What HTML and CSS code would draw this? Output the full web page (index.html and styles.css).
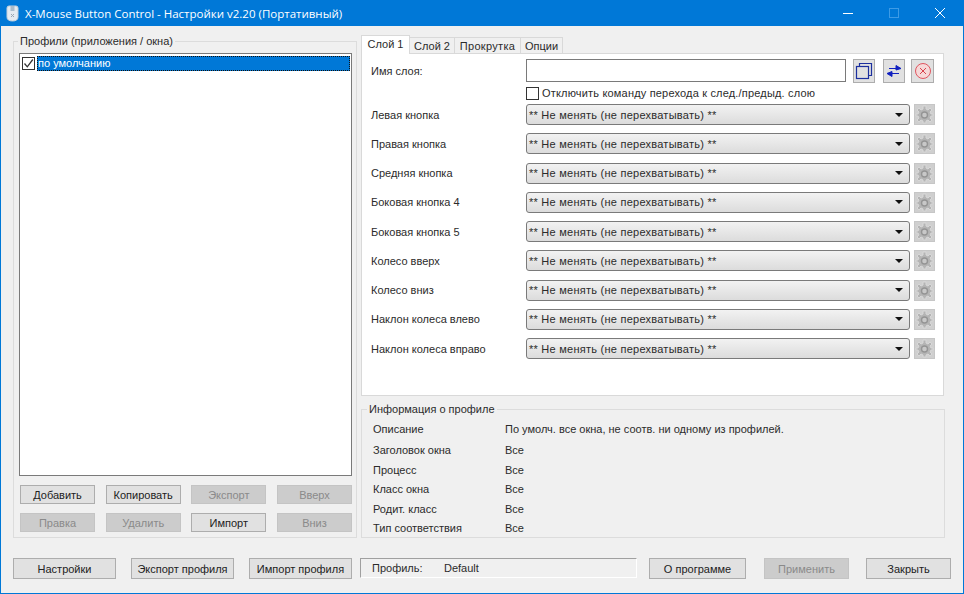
FILE: index.html
```html
<!DOCTYPE html>
<html lang="ru">
<head>
    <meta charset="UTF-8">
    <meta name="viewport" content="width=device-width, initial-scale=1.0">
    <title>X-Mouse Button Control</title>
    <link rel="stylesheet" href="styles.css">
</head>
<body>
<div class="window">
    <div class="titlebar">
        <svg class="app-icon" width="13" height="17" viewBox="0 0 13 17">
            <path d="M1 3 Q1 1 3 1 H10 Q12 1 12 3 V12 Q12 16 6.5 16 Q1 16 1 12 Z" fill="#e4ebf1" stroke="#c3d0db"/>
            <rect x="4.5" y="1" width="4" height="5" fill="#a9bccb"/>
            <path d="M5 9 L8 12 M8 9 L5 12" stroke="#9aa7b3" stroke-width="1"/>
        </svg>
        <span class="title-text">X-Mouse Button Control - Настройки v2.20 (Портативный)</span>
        <div class="win-controls">
            <svg width="12" height="12" viewBox="0 0 12 12"><path d="M1 6.5 H11" stroke="#fff"/></svg>
            <svg width="12" height="12" viewBox="0 0 12 12"><rect x="1.5" y="1.5" width="9" height="9" fill="none" stroke="#3d9be6"/></svg>
            <svg width="12" height="12" viewBox="0 0 12 12"><path d="M1 1 L11 11 M11 1 L1 11" stroke="#fff"/></svg>
        </div>
    </div>

    <div class="main">
        <fieldset class="group profiles">
            <legend>Профили (приложения / окна)</legend>
            <div class="list">
                <div class="list-row">
                    <span class="check checked">
                        <svg width="11" height="11" viewBox="0 0 11 11"><path d="M1.5 5.5 L4.3 8.8 L9.8 1.5" fill="none" stroke="#333" stroke-width="1.3"/></svg>
                    </span>
                    <span class="list-sel">по умолчанию</span>
                </div>
            </div>
            <div class="list-buttons">
                <button class="btn">Добавить</button>
                <button class="btn">Копировать</button>
                <button class="btn off">Экспорт</button>
                <button class="btn off">Вверх</button>
                <button class="btn off">Правка</button>
                <button class="btn off">Удалить</button>
                <button class="btn">Импорт</button>
                <button class="btn off">Вниз</button>
            </div>
        </fieldset>

        <div class="right">
            <div class="tabs">
                <div class="tab active">Слой 1</div>
                <div class="tab tab-two">Слой 2</div>
                <div class="tab tab-scroll">Прокрутка</div>
                <div class="tab tab-options">Опции</div>
            </div>
            <div class="panel">
                <div class="name-row">
                    <label class="row-label">Имя слоя:</label>
                    <div class="name-input"></div>
                    <button class="tool tool-copy">
                        <svg width="18" height="18" viewBox="0 0 18 18"><rect x="1.5" y="4.5" width="12" height="12" fill="none" stroke="#1c2f9e" stroke-width="1.2"/><path d="M4.5 4 V1.5 H16.5 V13.5 H14" fill="none" stroke="#1c2f9e" stroke-width="1.2"/></svg>
                    </button>
                    <button class="tool tool-swap">
                        <svg width="18" height="14" viewBox="0 0 18 14"><path d="M4 4.5 H14 M11 1.5 L16 4.5 L11 6 Z M14 9.5 H4 M7 7.5 L2 9.5 L7 12.5 Z" fill="#1020c0" stroke="#1020c0"/></svg>
                    </button>
                    <button class="tool tool-clear">
                        <svg width="18" height="18" viewBox="0 0 18 18"><circle cx="9" cy="9" r="7.5" fill="#f6d8d8" stroke="#e0555f"/><path d="M6 6 L12 12 M12 6 L6 12" stroke="#d8434d"/></svg>
                    </button>
                </div>
                <div class="disable-row">
                    <span class="check"></span>
                    <span>Отключить команду перехода к след./предыд. слою</span>
                </div>
                <div class="binds" id="binds"></div>
            </div>

            <fieldset class="group info">
                <legend>Информация о профиле</legend>
                <div class="info-row first"><span class="info-key">Описание</span><span>По умолч. все окна, не соотв. ни одному из профилей.</span></div>
                <div class="info-row"><span class="info-key">Заголовок окна</span><span>Все</span></div>
                <div class="info-row"><span class="info-key">Процесс</span><span>Все</span></div>
                <div class="info-row"><span class="info-key">Класс окна</span><span>Все</span></div>
                <div class="info-row"><span class="info-key">Родит. класс</span><span>Все</span></div>
                <div class="info-row"><span class="info-key">Тип соответствия</span><span>Все</span></div>
            </fieldset>
        </div>
    </div>

    <div class="footer">
        <button class="btn big settings">Настройки</button>
        <button class="btn big export">Экспорт профиля</button>
        <button class="btn big import">Импорт профиля</button>
        <div class="status"><span class="status-key">Профиль:</span><span>Default</span></div>
        <button class="btn big about">О программе</button>
        <button class="btn big off apply">Применить</button>
        <button class="btn big close">Закрыть</button>
    </div>
</div>

<script>
    const names = ['Левая кнопка', 'Правая кнопка', 'Средняя кнопка', 'Боковая кнопка 4', 'Боковая кнопка 5',
        'Колесо вверх', 'Колесо вниз', 'Наклон колеса влево', 'Наклон колеса вправо'];
    const gear = '<svg width="19" height="19" viewBox="0 0 19 19">' +
        '<path d="M8 1 H11 V4 L13 5 L15 3 L17 5 L15 7 L16 9 H18 V11 H16 L15 13 L17 15 L15 17 L13 15 L11 16 V18 H8 V16 L6 15 L4 17 L2 15 L4 13 L3 11 H1 V9 H3 L4 7 L2 5 L4 3 L6 5 L8 4 Z" fill="#b4b4b4" stroke="#d8d8d8"/>' +
        '<circle cx="9.5" cy="10" r="3" fill="#c8c8c8" stroke="#949494" stroke-width="1.4"/></svg>';
    const binds = document.getElementById('binds');
    names.forEach(function (name) {
        const row = document.createElement('div');
        row.className = 'bind-row';
        row.innerHTML = '<label class="row-label">' + name + '</label>' +
            '<div class="combo"><span class="combo-text">** Не менять (не перехватывать) **</span><span class="arrow"></span></div>' +
            '<div class="gear">' + gear + '</div>';
        binds.appendChild(row);
    });
</script>
</body>
</html>
```

FILE: styles.css
```css
* {
    box-sizing: border-box;
}
html, body {
    margin: 0;
    padding: 0;
}
body {
    width: 964px;
    height: 594px;
    overflow: hidden;
    background-color: #f0f0f0;
    font-family: "Liberation Sans", Arial, sans-serif;
    font-size: 11px;
    color: #2b2b2b;
}
.window {
    width: 964px;
    height: 594px;
    border: 1px solid #0078d7;
    border-top: none;
    display: flex;
    flex-direction: column;
}
.titlebar {
    height: 26px;
    margin: 0 -1px;
    background-color: #0078d7;
    color: #fff;
    display: flex;
    align-items: center;
    padding-left: 6px;
    flex-shrink: 0;
}
.app-icon {
    margin-right: 6px;
}
.title-text {
    font-family: "Open Sans", sans-serif;
    font-size: 11.5px;
}
.win-controls {
    margin-left: auto;
    display: flex;
    gap: 34px;
    padding-right: 18px;
}
.main {
    display: flex;
    padding: 9px 18px 0 12px;
    gap: 4px;
    height: 512px;
}
.group {
    margin: 0;
    min-width: 0;
    border: 1px solid #dcdcdc;
    padding: 0;
}
.group legend {
    padding: 0 2px;
    font-size: 11px;
}
.profiles {
    width: 344px;
    height: 503px;
    padding: 0 4px 0 5px;
}
.profiles legend {
    margin-left: -1px;
}
.list {
    height: 423px;
    background-color: #fff;
    border: 1px solid #7a7a7a;
    padding: 1px;
    margin-top: 6px;
}
.list-row {
    display: flex;
    align-items: center;
    height: 16px;
}
.check {
    width: 13px;
    height: 13px;
    border: 1px solid #333;
    background-color: #fff;
    display: inline-flex;
    align-items: center;
    justify-content: center;
    flex-shrink: 0;
}
.list-row .check {
    margin-left: 1px;
}
.list-sel {
    flex: 1;
    height: 15px;
    line-height: 13px;
    background-color: #0078d7;
    color: #fff;
    border: 1px dotted #111;
    margin-left: 2px;
}
.list-buttons {
    display: grid;
    grid-template-columns: repeat(4, 75px);
    justify-content: space-between;
    row-gap: 9px;
    margin: 9px 0 0 1px;
}
.btn {
    height: 19px;
    padding: 0;
    border: 1px solid #adadad;
    background-color: #e1e1e1;
    font-family: "Liberation Sans", Arial, sans-serif;
    font-size: 11px;
    color: #222;
}
.btn.off {
    background-color: #cccccc;
    border-color: #c4c4c4;
    color: #8a8a8a;
}
.right {
    width: 584px;
    display: flex;
    flex-direction: column;
}
.tabs {
    display: flex;
    align-items: flex-end;
    height: 19px;
    margin-bottom: -1px;
}
.tab {
    height: 17px;
    line-height: 16px;
    text-align: center;
    border: 1px solid #d9d9d9;
    border-left: none;
    background-color: #f0f0f0;
}
.tab.active {
    width: 49px;
    height: 19px;
    line-height: 17px;
    background-color: #fff;
    border-left: 1px solid #d9d9d9;
    border-bottom: none;
    position: relative;
    z-index: 1;
}
.tab-two {
    width: 45px;
}
.tab-scroll {
    width: 66px;
    letter-spacing: 0.3px;
}
.tab-options {
    width: 42px;
}
.panel {
    width: 583px;
    height: 344px;
    background-color: #fff;
    border: 1px solid #d9d9d9;
    padding: 5px 0 0 9px;
}
.name-row {
    display: flex;
    align-items: flex-start;
}
.row-label {
    width: 155px;
    flex-shrink: 0;
}
.name-row .row-label {
    padding-top: 6px;
}
.name-input {
    width: 320px;
    height: 23px;
    border: 1px solid #7a7a7a;
    background-color: #fff;
    margin-right: 7px;
}
.tool {
    width: 22px;
    height: 24px;
    padding: 0;
    border: 1px solid #adadad;
    background-color: #e1e1e1;
    display: flex;
    align-items: center;
    justify-content: center;
}
.tool-copy {
    margin-right: 8px;
}
.tool-swap {
    margin-right: 6px;
}
.tool-clear {
    width: 23px;
}
.disable-row {
    display: flex;
    align-items: center;
    gap: 3px;
    margin: 3px 0 0 155px;
    height: 14px;
    letter-spacing: 0.18px;
}
.bind-row {
    display: flex;
    align-items: center;
    height: 29.25px;
}
.combo {
    width: 384px;
    height: 21px;
    border: 1px solid #7a7a7a;
    border-radius: 3px;
    background: linear-gradient(#f2f2f2, #dcdcdc);
    display: flex;
    align-items: center;
    padding: 0 6px 0 2px;
}
.combo-text {
    flex: 1;
    letter-spacing: 0.25px;
}
.arrow {
    width: 0;
    height: 0;
    border-left: 4px solid transparent;
    border-right: 4px solid transparent;
    border-top: 4px solid #111;
}
.gear {
    width: 21px;
    height: 21px;
    margin-left: 4px;
    background-color: #cfcfcf;
    border: 1px solid #c6c6c6;
    display: flex;
    align-items: center;
    justify-content: center;
}
.info {
    width: 584px;
    height: 135px;
    margin-top: 7px;
    padding: 0 0 0 11px;
}
.info legend {
    margin-left: -6px;
}
.info-row {
    display: flex;
    height: 19.5px;
    line-height: 19px;
}
.info-row.first {
    height: 21px;
    margin-top: 5px;
}
.info-key {
    width: 132px;
}
.footer {
    display: flex;
    align-items: flex-start;
    padding: 20px 0 0 12px;
}
.btn.big {
    height: 21px;
}
.settings, .export, .import {
    width: 103px;
}
.settings, .export {
    margin-right: 15px;
}
.import {
    margin-right: 8px;
}
.status {
    width: 277px;
    height: 20px;
    border-top: 1px solid #a0a0a0;
    border-left: 1px solid #a0a0a0;
    border-right: 1px solid #fff;
    border-bottom: 1px solid #fff;
    padding-left: 11px;
    line-height: 18px;
    display: flex;
    margin-right: 12px;
}
.status-key {
    width: 72px;
}
.about {
    width: 97px;
    margin-right: 18px;
}
.apply {
    width: 85px;
    margin-right: 17px;
}
.close {
    width: 85px;
}
```
